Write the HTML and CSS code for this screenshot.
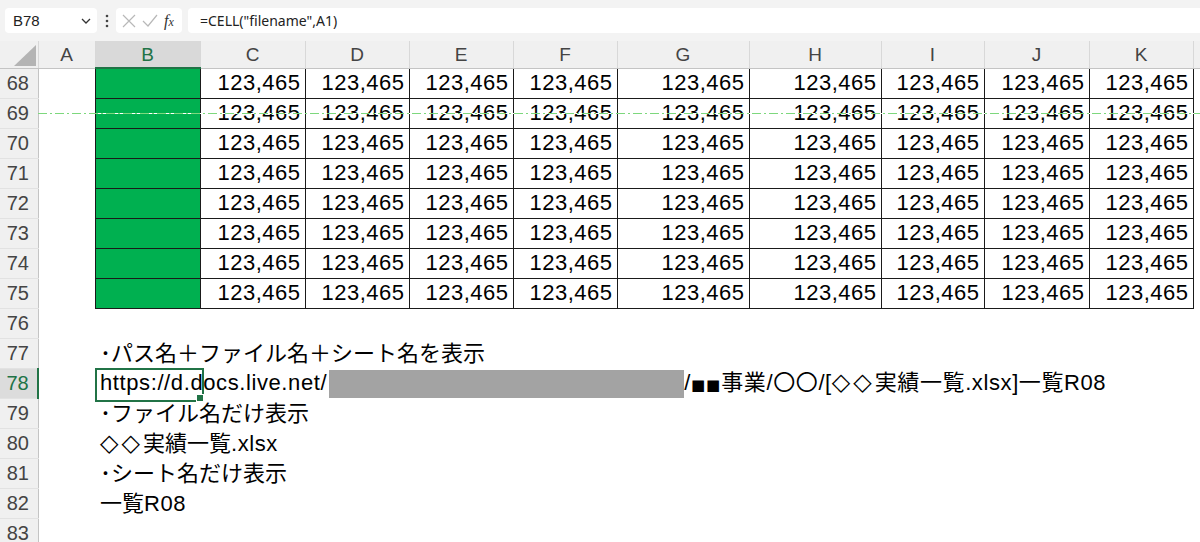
FILE: index.html
```html
<!DOCTYPE html>
<html lang="ja">
  <head>
    <meta charset="UTF-8" />
    <title>実績一覧</title>
    <link rel="stylesheet" href="styles.css">
  </head>
  <body>
    <div class="toolbar">
      <div class="name-box">
        <span>B78</span>
        <svg class="caret" width="10" height="6" viewBox="0 0 10 6"><path d="M1 1l4 4 4-4" fill="none" stroke="#333" stroke-width="1.3"/></svg>
      </div>
      <svg class="grip" width="4" height="14" viewBox="0 0 4 14"><circle cx="2" cy="2" r="1.3"/><circle cx="2" cy="7" r="1.3"/><circle cx="2" cy="12" r="1.3"/></svg>
      <div class="fx-buttons">
        <svg width="14" height="14" viewBox="0 0 14 14"><path d="M1 1l12 12M13 1L1 13" stroke="#b8b8b8" stroke-width="1.2"/></svg>
        <svg width="16" height="14" viewBox="0 0 16 14"><path d="M1 7l5 5L15 1" fill="none" stroke="#b8b8b8" stroke-width="1.2"/></svg>
        <span class="fx">f<i>x</i></span>
      </div>
      <div class="formula">=CELL("filename",A1)</div>
    </div>

    <div class="sheet-wrap">
      <table class="sheet">
        <colgroup>
          <col style="width:38px"><col style="width:57px"><col style="width:105px">
          <col style="width:105px"><col style="width:104px"><col style="width:104px">
          <col style="width:104px"><col style="width:132px"><col style="width:132px">
          <col style="width:103px"><col style="width:105px"><col style="width:104px">
          <col style="width:100px">
        </colgroup>
        <tr class="head">
          <th class="corner"><svg width="22" height="21" viewBox="0 0 22 21"><path d="M22 0V21H0z" fill="#b4b4b4"/></svg></th>
          <th>A</th><th class="on">B</th><th>C</th><th>D</th><th>E</th><th>F</th>
          <th>G</th><th>H</th><th>I</th><th>J</th><th>K</th><th></th>
        </tr>
        <tr><th class="row-head">68</th><td></td><td class="fill"></td><td class="num">123,465</td><td class="num">123,465</td><td class="num">123,465</td><td class="num">123,465</td><td class="num">123,465</td><td class="num">123,465</td><td class="num">123,465</td><td class="num">123,465</td><td class="num">123,465</td><td></td></tr>
        <tr><th class="row-head">69</th><td></td><td class="fill"></td><td class="num">123,465</td><td class="num">123,465</td><td class="num">123,465</td><td class="num">123,465</td><td class="num">123,465</td><td class="num">123,465</td><td class="num">123,465</td><td class="num">123,465</td><td class="num">123,465</td><td></td></tr>
        <tr><th class="row-head">70</th><td></td><td class="fill"></td><td class="num">123,465</td><td class="num">123,465</td><td class="num">123,465</td><td class="num">123,465</td><td class="num">123,465</td><td class="num">123,465</td><td class="num">123,465</td><td class="num">123,465</td><td class="num">123,465</td><td></td></tr>
        <tr><th class="row-head">71</th><td></td><td class="fill"></td><td class="num">123,465</td><td class="num">123,465</td><td class="num">123,465</td><td class="num">123,465</td><td class="num">123,465</td><td class="num">123,465</td><td class="num">123,465</td><td class="num">123,465</td><td class="num">123,465</td><td></td></tr>
        <tr><th class="row-head">72</th><td></td><td class="fill"></td><td class="num">123,465</td><td class="num">123,465</td><td class="num">123,465</td><td class="num">123,465</td><td class="num">123,465</td><td class="num">123,465</td><td class="num">123,465</td><td class="num">123,465</td><td class="num">123,465</td><td></td></tr>
        <tr><th class="row-head">73</th><td></td><td class="fill"></td><td class="num">123,465</td><td class="num">123,465</td><td class="num">123,465</td><td class="num">123,465</td><td class="num">123,465</td><td class="num">123,465</td><td class="num">123,465</td><td class="num">123,465</td><td class="num">123,465</td><td></td></tr>
        <tr><th class="row-head">74</th><td></td><td class="fill"></td><td class="num">123,465</td><td class="num">123,465</td><td class="num">123,465</td><td class="num">123,465</td><td class="num">123,465</td><td class="num">123,465</td><td class="num">123,465</td><td class="num">123,465</td><td class="num">123,465</td><td></td></tr>
        <tr><th class="row-head">75</th><td></td><td class="fill"></td><td class="num">123,465</td><td class="num">123,465</td><td class="num">123,465</td><td class="num">123,465</td><td class="num">123,465</td><td class="num">123,465</td><td class="num">123,465</td><td class="num">123,465</td><td class="num">123,465</td><td></td></tr>
        <tr><th class="row-head">76</th><td></td><td></td><td></td><td></td><td></td><td></td><td></td><td></td><td></td><td></td><td></td><td></td></tr>
        <tr><th class="row-head">77</th><td></td><td class="text">･パス名＋ファイル名＋シート名を表示</td><td></td><td></td><td></td><td></td><td></td><td></td><td></td><td></td><td></td><td></td></tr>
        <tr><th class="row-head on">78</th><td></td><td class="text active">https://d.docs.live.net/<span class="hidden-path"></span>/<span class="sq">■■</span>事業/〇〇/[<span class="dia">◇◇</span>実績一覧.xlsx]一覧R08</td><td></td><td></td><td></td><td></td><td></td><td></td><td></td><td></td><td></td><td></td></tr>
        <tr><th class="row-head">79</th><td></td><td class="text">･ファイル名だけ表示</td><td></td><td></td><td></td><td></td><td></td><td></td><td></td><td></td><td></td><td></td></tr>
        <tr><th class="row-head">80</th><td></td><td class="text"><span class="dia">◇◇</span>実績一覧<span class="en">.xlsx</span></td><td></td><td></td><td></td><td></td><td></td><td></td><td></td><td></td><td></td><td></td></tr>
        <tr><th class="row-head">81</th><td></td><td class="text">･シート名だけ表示</td><td></td><td></td><td></td><td></td><td></td><td></td><td></td><td></td><td></td><td></td></tr>
        <tr><th class="row-head">82</th><td></td><td class="text">一覧<span class="en">R08</span></td><td></td><td></td><td></td><td></td><td></td><td></td><td></td><td></td><td></td><td></td></tr>
        <tr><th class="row-head">83</th><td></td><td></td><td></td><td></td><td></td><td></td><td></td><td></td><td></td><td></td><td></td><td></td></tr>
      </table>
      <!-- page break marker running through row 69 -->
      <div class="page-break"></div>
    </div>
  </body>
</html>
```

FILE: styles.css
```css
* {
  margin: 0;
  padding: 0;
  box-sizing: border-box;
}

body {
  width: 1200px;
  height: 542px;
  overflow: hidden;
  background: #fff;
  font-family: "Liberation Sans", "Noto Sans CJK JP", sans-serif;
  color: #000;
}

/* name box + formula bar */
.toolbar {
  height: 41px;
  background: #f3f3f3;
  display: flex;
  align-items: center;
  padding: 0 0 0 5px;
}

.name-box {
  width: 92px;
  height: 25px;
  background: #fff;
  border-radius: 4px;
  display: flex;
  align-items: center;
  justify-content: space-between;
  padding: 0 6px 0 8px;
  font-size: 15px;
  color: #222;
}

.grip {
  margin: 0 7px 0 8px;
  fill: #444;
}

.fx-buttons {
  width: 66px;
  height: 25px;
  background: #fff;
  border-radius: 4px;
  display: flex;
  align-items: center;
  gap: 6px;
  padding-left: 6px;
}

.fx {
  font-family: "Liberation Serif", serif;
  font-style: italic;
  font-size: 16px;
  color: #333;
}

.fx i {
  font-size: 12px;
}

.formula {
  flex: 1;
  height: 25px;
  margin-left: 6px;
  background: #fff;
  border-radius: 4px 0 0 4px;
  padding-left: 12px;
  font-family: "Noto Sans", "Noto Sans CJK JP", sans-serif;
  font-size: 14px;
  line-height: 25px;
  color: #222;
}

/* grid */
.sheet-wrap {
  position: relative;
}

.sheet {
  border-collapse: collapse;
  table-layout: fixed;
  width: 1293px;
}

.sheet tr {
  height: 30px;
}

.sheet tr.head {
  height: 27px;
}

.head th {
  background: #f0f0f0;
  border-right: 1px solid #d8d8d8;
  border-bottom: 1px solid #c4c4c4;
  font-weight: normal;
  font-size: 19px;
  color: #444;
  padding-top: 1px;
}

.head th.on {
  background: #d9d9d9;
  color: #217346;
  border-bottom: 2px solid #217346;
}

.head th.corner {
  text-align: right;
  vertical-align: bottom;
  padding: 0 2px 2px 0;
  line-height: 0;
}

.row-head {
  background: #f0f0f0;
  border-right: 1px solid #c4c4c4;
  border-bottom: 1px solid #e2e2e2;
  font-weight: normal;
  font-size: 20px;
  line-height: 26px;
  color: #444;
  text-align: center;
  padding-right: 2px;
}

.row-head.on {
  background: #dcdcdc;
  color: #217346;
  border-right: 2px solid #217346;
}

.sheet td {
  font-size: 22px;
  line-height: 26px;
  white-space: nowrap;
  vertical-align: middle;
}

.fill {
  background: #00b050;
  border: 1px solid #1a1a1a;
}

.num {
  border: 1px solid #1a1a1a;
  text-align: right;
  padding-right: 4px;
  letter-spacing: 0.5px;
}

.text {
  padding-left: 5px;
  padding-top: 2px;
}

.en {
  letter-spacing: 0.6px;
}

.dia {
  font-family: "DejaVu Sans", sans-serif;
  font-size: 24px;
  line-height: 0;
  letter-spacing: 3px;
  color: #000;
}

.active {
  position: relative;
  letter-spacing: 0.6px;
}

.active::before {
  content: "";
  position: absolute;
  left: 0;
  top: 0;
  width: 105px;
  height: 30px;
  border: 2px solid #217346;
}

.active::after {
  content: "";
  position: absolute;
  left: 101px;
  top: 26px;
  width: 6px;
  height: 6px;
  background: #217346;
  border: 1px solid #fff;
}

.hidden-path {
  display: inline-block;
  width: 355px;
  height: 28px;
  margin-left: 2px;
  background: #a3a3a3;
  vertical-align: middle;
}

.sq {
  font-family: "DejaVu Sans", sans-serif;
  font-size: 15px;
  letter-spacing: 1px;
}

.page-break {
  position: absolute;
  left: 38px;
  right: 0;
  top: 72px;
  height: 1px;
  background: repeating-linear-gradient(90deg, #7dd87d 0 9px, #fff 9px 12px, #7dd87d 12px 14px, #fff 14px 17px);
}
```
